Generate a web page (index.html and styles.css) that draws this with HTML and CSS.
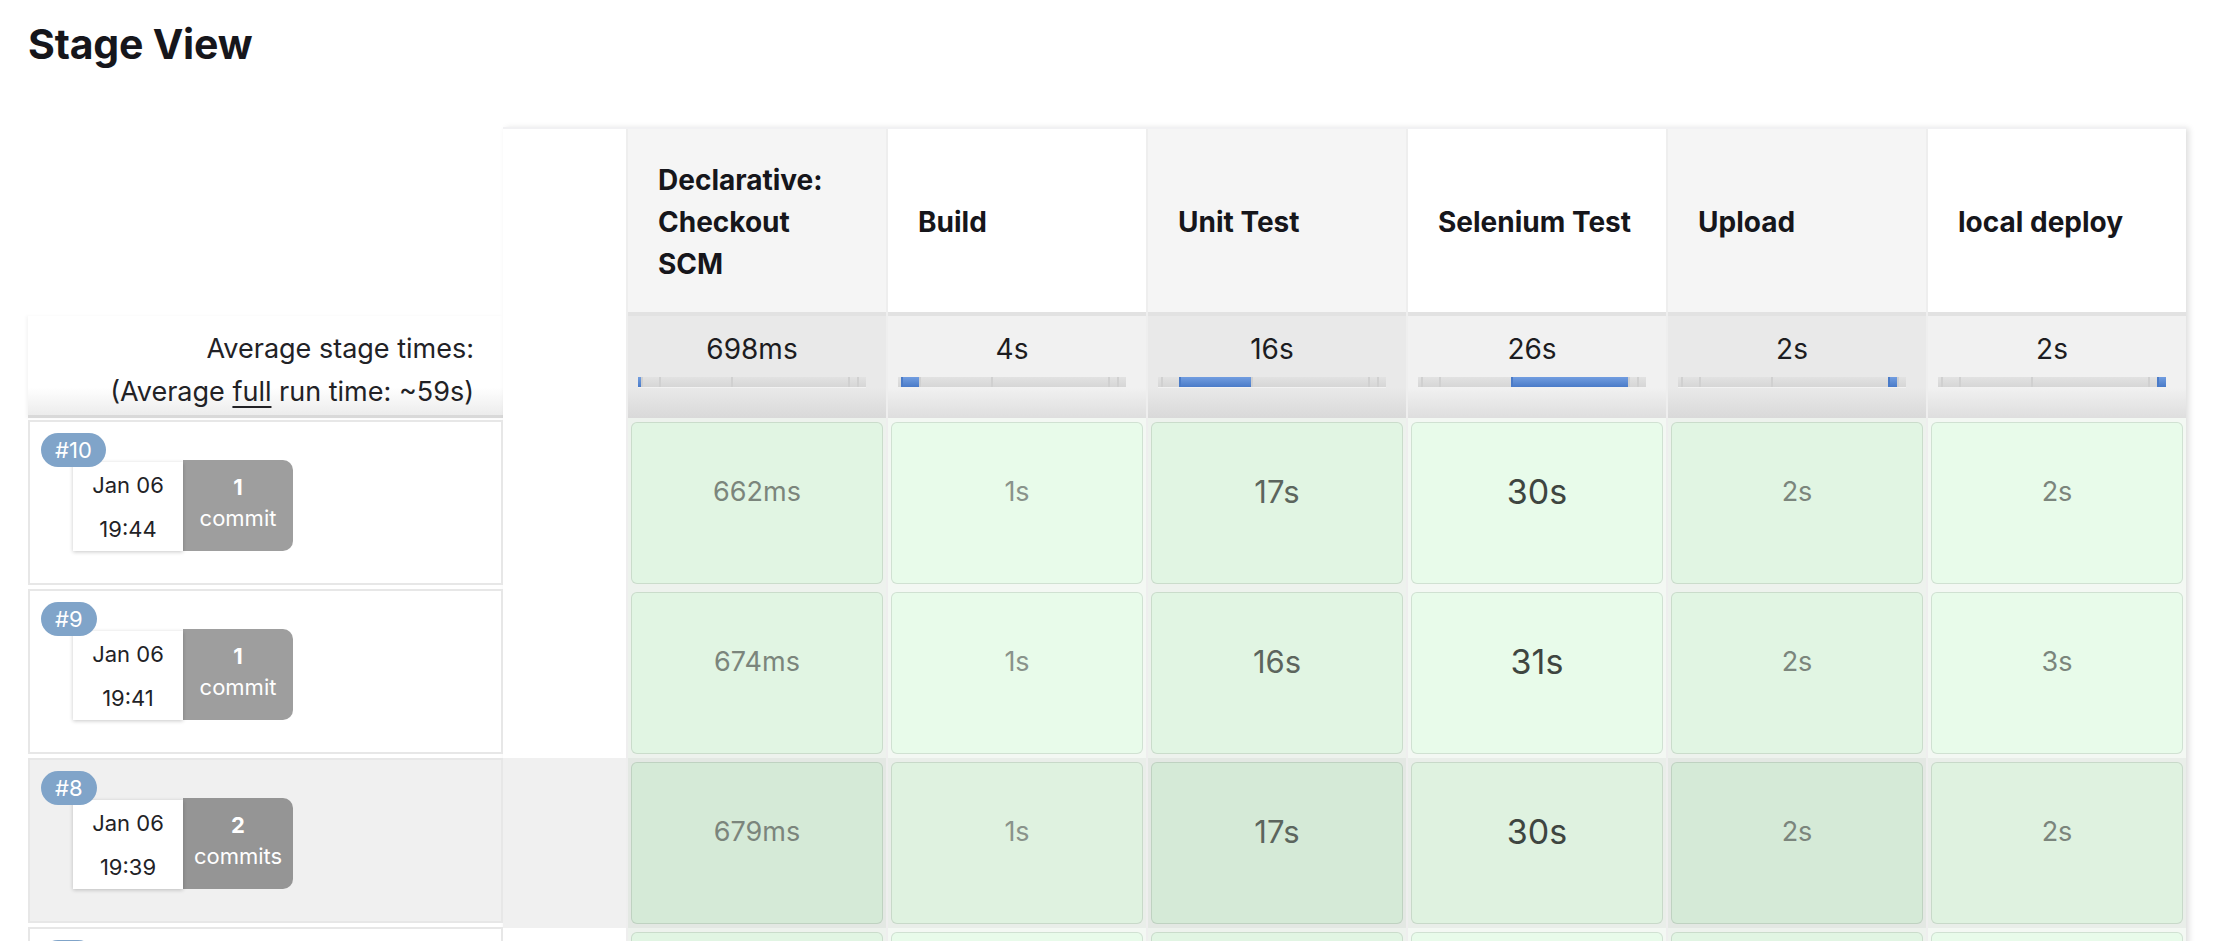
FILE: index.html
```html
<!DOCTYPE html>
<html lang="en">
<head>
<meta charset="utf-8">
<title>Stage View</title>
<link rel="stylesheet" href="styles.css">
</head>
<body>
<main class="page">
  <h2 class="title">Stage View</h2>
  <div class="stage-view">
    <div class="runs">
      <div class="runs-head"></div>
      <div class="avg-label">
        <div>Average stage times:</div>
        <div>(Average <u>full</u> run time: ~59s)</div>
      </div>
      <div class="run">
        <span class="badge">#10</span>
        <div class="summary">
          <div class="date"><div>Jan 06</div><div>19:44</div></div>
          <div class="commits"><b>1</b>commit</div>
        </div>
      </div>
      <div class="run">
        <span class="badge">#9</span>
        <div class="summary">
          <div class="date"><div>Jan 06</div><div>19:41</div></div>
          <div class="commits"><b>1</b>commit</div>
        </div>
      </div>
      <div class="run hl">
        <span class="badge">#8</span>
        <div class="summary">
          <div class="date"><div>Jan 06</div><div>19:39</div></div>
          <div class="commits"><b>2</b>commits</div>
        </div>
      </div>
      <div class="run">
        <span class="badge">#7</span>
        <div class="summary">
          <div class="date"><div>Jan 06</div><div>19:35</div></div>
          <div class="commits"><b>1</b>commit</div>
        </div>
      </div>
    </div>

    <div class="table">
      <div class="trow head">
        <div class="corner"></div>
        <div class="th"><span>Declarative: Checkout SCM</span></div>
        <div class="th"><span>Build</span></div>
        <div class="th"><span>Unit Test</span></div>
        <div class="th"><span>Selenium Test</span></div>
        <div class="th"><span>Upload</span></div>
        <div class="th"><span>local deploy</span></div>
      </div>

      <div class="trow avg">
        <div class="corner"></div>
        <div class="ac">698ms
          <div class="bar"><i class="on" style="width:3px"></i><i style="width:18px"></i><i style="width:72px"></i><i style="width:117px"></i><i style="width:9px"></i><i style="width:9px"></i></div>
        </div>
        <div class="ac">4s
          <div class="bar"><i style="width:3px"></i><i class="on" style="width:18px"></i><i style="width:72px"></i><i style="width:117px"></i><i style="width:9px"></i><i style="width:9px"></i></div>
        </div>
        <div class="ac">16s
          <div class="bar"><i style="width:3px"></i><i style="width:18px"></i><i class="on" style="width:72px"></i><i style="width:117px"></i><i style="width:9px"></i><i style="width:9px"></i></div>
        </div>
        <div class="ac">26s
          <div class="bar"><i style="width:3px"></i><i style="width:18px"></i><i style="width:72px"></i><i class="on" style="width:117px"></i><i style="width:9px"></i><i style="width:9px"></i></div>
        </div>
        <div class="ac">2s
          <div class="bar"><i style="width:3px"></i><i style="width:18px"></i><i style="width:72px"></i><i style="width:117px"></i><i class="on" style="width:9px"></i><i style="width:9px"></i></div>
        </div>
        <div class="ac">2s
          <div class="bar"><i style="width:3px"></i><i style="width:18px"></i><i style="width:72px"></i><i style="width:117px"></i><i style="width:9px"></i><i class="on" style="width:9px"></i></div>
        </div>
      </div>

      <div class="trow data">
        <div class="corner"></div>
        <div class="td"><div class="box t-s">662ms</div></div>
        <div class="td"><div class="box t-xs">1s</div></div>
        <div class="td"><div class="box t-m">17s</div></div>
        <div class="td"><div class="box t-l">30s</div></div>
        <div class="td"><div class="box t-s">2s</div></div>
        <div class="td"><div class="box t-s">2s</div></div>
      </div>
      <div class="trow data">
        <div class="corner"></div>
        <div class="td"><div class="box t-s">674ms</div></div>
        <div class="td"><div class="box t-xs">1s</div></div>
        <div class="td"><div class="box t-m">16s</div></div>
        <div class="td"><div class="box t-l">31s</div></div>
        <div class="td"><div class="box t-s">2s</div></div>
        <div class="td"><div class="box t-s">3s</div></div>
      </div>
      <div class="trow data hl">
        <div class="corner"></div>
        <div class="td"><div class="box t-s">679ms</div></div>
        <div class="td"><div class="box t-xs">1s</div></div>
        <div class="td"><div class="box t-m">17s</div></div>
        <div class="td"><div class="box t-l">30s</div></div>
        <div class="td"><div class="box t-s">2s</div></div>
        <div class="td"><div class="box t-s">2s</div></div>
      </div>
      <div class="trow data">
        <div class="corner"></div>
        <div class="td"><div class="box t-s">701ms</div></div>
        <div class="td"><div class="box t-xs">1s</div></div>
        <div class="td"><div class="box t-m">16s</div></div>
        <div class="td"><div class="box t-l">29s</div></div>
        <div class="td"><div class="box t-s">2s</div></div>
        <div class="td"><div class="box t-s">2s</div></div>
      </div>
    </div>
  </div>
</main>
</body>
</html>
```

FILE: styles.css
```css
* { box-sizing: border-box; }

html, body {
  margin: 0;
  background: #ffffff;
  overflow: hidden;
}

body {
  font-family: Inter, "Noto Sans", "Liberation Sans", sans-serif;
  color: #1c1c21;
}

.page {
  padding-left: 28px;
}

.title {
  margin: 0;
  padding-top: 19px;
  font-size: 41px;
  line-height: 50px;
  font-weight: 700;
  color: #16161b;
  letter-spacing: -0.2px;
}

.stage-view {
  display: flex;
  align-items: flex-start;
  margin-top: 58px;
}

/* ---------- left column: run summaries ---------- */
.runs {
  width: 475px;
  flex: none;
}

.runs-head {
  height: 189px;
}

.avg-label {
  height: 102px;
  padding: 11px 29px 0 0;
  text-align: right;
  font-size: 27px;
  line-height: 43px;
  color: #222226;
  background: linear-gradient(#ffffff 72%, #ececec);
  border-bottom: 3px solid #d9d9d9;
  box-shadow: -2px 0 3px rgba(0, 0, 0, 0.04);
}

.avg-label u {
  text-decoration-thickness: 2px;
  text-underline-offset: 5px;
}

.run {
  position: relative;
  height: 165px;
  margin-top: 4px;
  border: 2px solid #e7e7e7;
  background: #ffffff;
  padding: 38px 0 0 43px;
}

.avg-label + .run {
  margin-top: 2px;
}

.run.hl {
  background: #f0f0f0;
}

.badge {
  position: absolute;
  left: 11px;
  top: 11px;
  z-index: 1;
  height: 34px;
  padding: 0 14px;
  border-radius: 17px;
  background: #80a4c9;
  color: #ffffff;
  font-size: 22px;
  line-height: 34px;
}

.summary {
  display: flex;
  align-items: flex-end;
}

.date {
  width: 110px;
  height: 89px;
  padding-top: 1px;
  background: #ffffff;
  box-shadow: 0 1px 4px rgba(0, 0, 0, 0.22);
  text-align: center;
  font-size: 22px;
  line-height: 44px;
  color: #222226;
}

.commits {
  width: 110px;
  height: 91px;
  padding-top: 12px;
  background: rgba(0, 0, 0, 0.38);
  border-radius: 0 10px 10px 0;
  color: #ffffff;
  text-align: center;
  font-size: 22px;
  line-height: 31px;
}

.commits b {
  display: block;
  font-weight: 700;
}

/* ---------- stage table ---------- */
.table {
  width: 1683px;
  flex: none;
  background: #eeeeee;
  border-top: 2px solid #f1f1f3;
  box-shadow: 3px 1px 6px rgba(0, 0, 0, 0.13);
}

.trow {
  display: grid;
  grid-template-columns: 123px repeat(6, 258px);
  column-gap: 2px;
}

.corner {
  background: #ffffff;
}

/* header */
.head .th {
  height: 187px;
  display: flex;
  align-items: center;
  padding: 2px 32px 0 30px;
  border-bottom: 4px solid #e2e2e2;
  font-size: 28px;
  font-weight: 700;
  line-height: 42px;
  color: #16161b;
  background: #ffffff;
}

.head .th:nth-child(even) {
  background: #f5f5f5;
}

/* averages */
.avg .ac {
  height: 102px;
  padding: 13px 20px 0 10px;
  text-align: center;
  font-size: 28px;
  line-height: 40px;
  color: #1c1c21;
  background: linear-gradient(#f1f1f1 70%, #dedede);
}

.avg .ac:nth-child(even) {
  background: linear-gradient(#e9e9e9 70%, #d9d9d9);
}

.bar {
  display: flex;
  height: 10px;
  margin-top: 8px;
  background: #dcdcdc;
  box-shadow: 0 1px 0 #f2f2f2;
}

.bar i {
  display: block;
  height: 10px;
  background: linear-gradient(#e2e2e2, #d6d6d6);
  border-left: 2px solid #d0d0d0;
}

.bar i:first-child {
  border-left: 0;
}

.bar i.on {
  background: linear-gradient(#719de0, #4a7bc8);
  border-left-color: #4a7bc8;
}

/* run rows */
.data .td {
  height: 170px;
  padding: 4px 3px;
  background: #f3f8f3;
}

.data .td:nth-child(even) {
  background: #edf2ed;
}

.data .box {
  height: 162px;
  padding-top: 49px;
  border: 1px solid rgba(0, 0, 0, 0.1);
  border-radius: 6px;
  text-align: center;
  line-height: 40px;
  background: #e8fbea;
}

.data .td:nth-child(even) .box {
  background: #e1f5e3;
}

.data.hl .corner {
  background: #f0f0f0;
}

.data.hl .td {
  background: #e9eee9;
}

.data.hl .td:nth-child(even) {
  background: #e3e8e3;
}

.data.hl .box {
  background: #dff2e0;
}

.data.hl .td:nth-child(even) .box {
  background: #d5ead7;
}

.t-xs { font-size: 27px; color: #8a938b; }
.t-s  { font-size: 27px; color: #7b857c; }
.t-m  { font-size: 31px; color: #5c655d; }
.t-l  { font-size: 34px; color: #3e4540; }
```
